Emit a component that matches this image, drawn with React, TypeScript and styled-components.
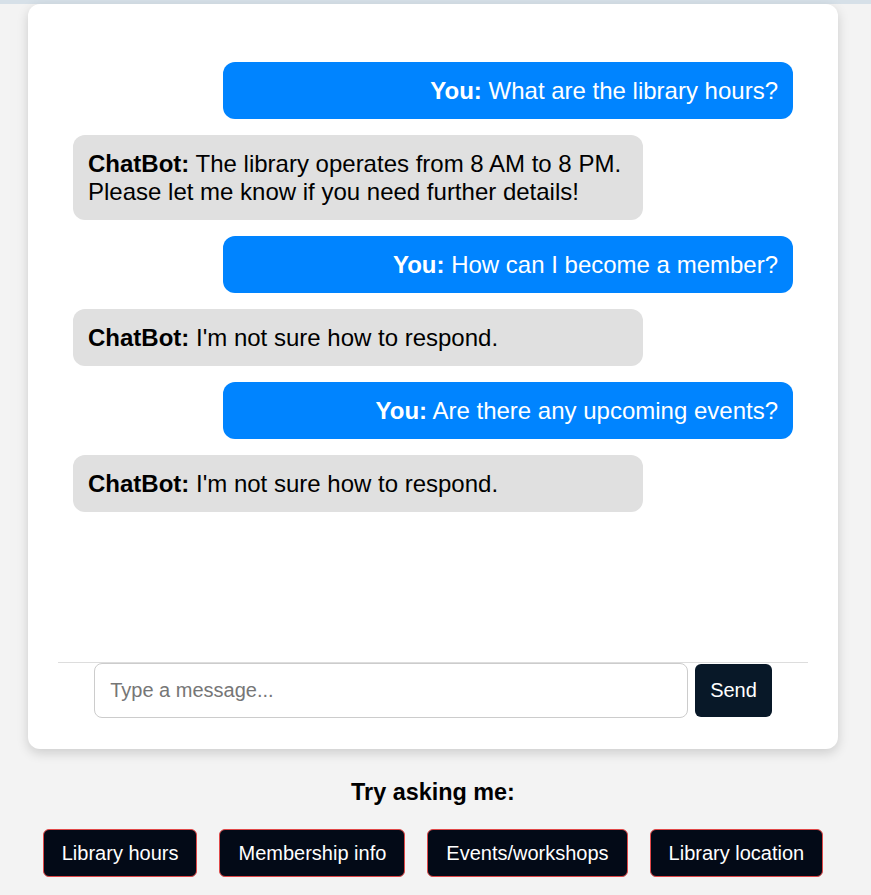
import React from "react";
import styled, { createGlobalStyle } from "styled-components";

const Global = createGlobalStyle`
  html, body { margin: 0; padding: 0; }
  body {
    background: #f3f3f3;
    font-family: "Liberation Sans", Arial, sans-serif;
  }
`;

const TopStrip = styled.div`
  height: 4px;
  background: #d6e0e8;
`;

const Page = styled.div`
  display: flex;
  flex-direction: column;
  padding: 0 33px 0 28px;
`;

const Card = styled.div`
  background: #ffffff;
  border-radius: 12px;
  box-shadow: 0 4px 12px rgba(0, 0, 0, 0.16);
  padding: 30px 30px 31px;
  display: flex;
  flex-direction: column;
`;

const MessageList = styled.div`
  height: 628px;
  box-sizing: border-box;
  padding: 28px 15px;
  display: flex;
  flex-direction: column;
  gap: 16px;
`;

const Bubble = styled.div<{ $user?: boolean }>`
  width: 75%;
  padding: 14.5px 15px;
  border-radius: 12px;
  font-size: 24px;
  line-height: 28px;
  background: ${(p) => (p.$user ? "#0084ff" : "#e0e0e0")};
  color: ${(p) => (p.$user ? "#ffffff" : "#000000")};
  text-align: ${(p) => (p.$user ? "right" : "left")};
  align-self: ${(p) => (p.$user ? "flex-end" : "flex-start")};
`;

const Label = styled.strong`
  font-weight: bold;
`;

const InputRow = styled.div`
  border-top: 1px solid #dddddd;
  display: flex;
  justify-content: center;
  align-items: center;
  gap: 7px;
`;

const TextInput = styled.input`
  width: 594px;
  height: 55px;
  box-sizing: border-box;
  border: 1px solid #cccccc;
  border-radius: 8px;
  padding: 0 15px;
  font-family: "Liberation Sans", Arial, sans-serif;
  font-size: 20px;
  color: #000;
  outline: none;
  &::placeholder { color: #767676; }
`;

const SendButton = styled.button`
  height: 53px;
  padding: 0 15px;
  border: none;
  border-radius: 6px;
  background: #081828;
  color: #ffffff;
  font-family: "Liberation Sans", Arial, sans-serif;
  font-size: 20px;
`;

const Suggestions = styled.div`
  display: flex;
  flex-direction: column;
  align-items: center;
  padding-top: 30px;
`;

const SuggestTitle = styled.h3`
  margin: 0;
  font-size: 23.4px;
  font-weight: bold;
  color: #000;
`;

const SuggestRow = styled.div`
  display: flex;
  justify-content: center;
  gap: 22px;
  margin-top: 23px;
`;

const Chip = styled.button`
  background: #030a17;
  color: #ffffff;
  border: 1px solid #e04848;
  border-radius: 6px;
  padding: 12px 18px;
  line-height: 22px;
  font-family: "Liberation Sans", Arial, sans-serif;
  font-size: 20px;
`;

const messages = [
  { user: true, text: "What are the library hours?" },
  {
    user: false,
    text: "The library operates from 8 AM to 8 PM.\nPlease let me know if you need further details!",
  },
  { user: true, text: "How can I become a member?" },
  { user: false, text: "I'm not sure how to respond." },
  { user: true, text: "Are there any upcoming events?" },
  { user: false, text: "I'm not sure how to respond." },
];

const chips = ["Library hours", "Membership info", "Events/workshops", "Library location"];

export default function App() {
  return (
    <>
      <Global />
      <TopStrip />
      <Page>
        <Card>
          <MessageList>
            {messages.map((m, i) => (
              <Bubble key={i} $user={m.user}>
                <Label>{m.user ? "You:" : "ChatBot:"}</Label>{" "}
                {m.text.split("\n").map((line, j) => (
                  <React.Fragment key={j}>
                    {j > 0 && <br />}
                    {line}
                  </React.Fragment>
                ))}
              </Bubble>
            ))}
          </MessageList>
          <InputRow>
            <TextInput placeholder="Type a message..." />
            <SendButton>Send</SendButton>
          </InputRow>
        </Card>
        <Suggestions>
          <SuggestTitle>Try asking me:</SuggestTitle>
          <SuggestRow>
            {chips.map((c) => (
              <Chip key={c}>{c}</Chip>
            ))}
          </SuggestRow>
        </Suggestions>
      </Page>
    </>
  );
}
